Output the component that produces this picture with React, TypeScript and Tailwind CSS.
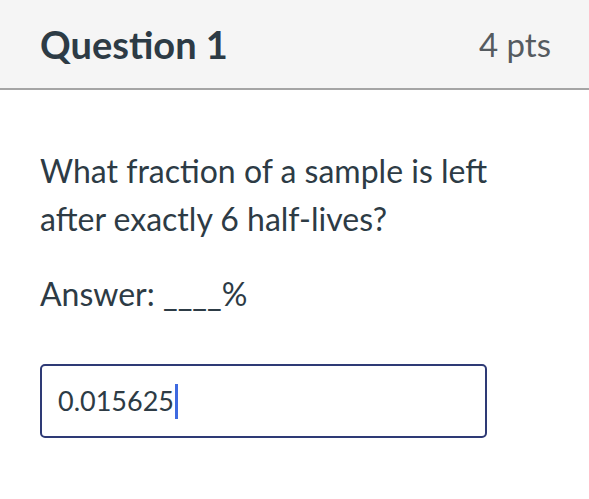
export default function App() {
  return (
    <div className="w-[589px] h-[499px] bg-white font-['Lato',_sans-serif] text-[#2d3b45]">
      {/* Header */}
      <div className="h-[90px] bg-[#f5f5f5] border-b-2 border-[#a5a5a5] flex items-center justify-between pl-[40px] pr-[38px]">
        <h2 className="text-[38px] font-bold leading-none">Question 1</h2>
        <span className="text-[33px] text-[#555b60] leading-none">4 pts</span>
      </div>

      {/* Body */}
      <div className="px-[40px] pt-[57px]">
        <p className="text-[32px] leading-[48px]">
          What fraction of a sample is left
          <br />
          after exactly 6 half-lives?
        </p>
        <p className="text-[32px] leading-[48px] mt-[27px]">Answer: ____%</p>

        <div className="mt-[46px] w-[447px] h-[74px] border-2 border-[#2e3a75] rounded-[5px] flex items-center pl-[16px]">
          <span className="text-[27px] text-[#2d3b45]">0.015625</span>
          <span className="w-[3px] h-[35px] bg-[#3e6ae0] ml-[1px]" />
        </div>
      </div>
    </div>
  );
}
